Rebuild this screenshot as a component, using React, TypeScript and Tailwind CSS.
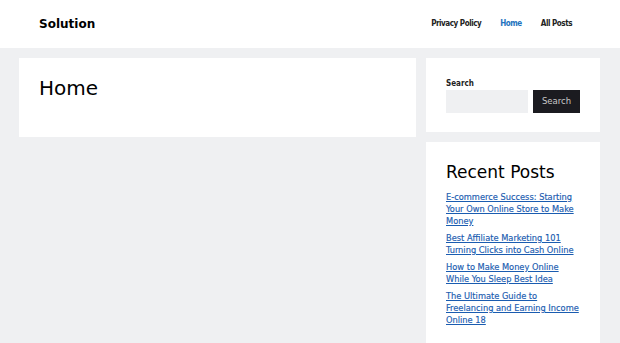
import React from 'react';

const posts = [
  'E-commerce Success: Starting Your Own Online Store to Make Money',
  'Best Affiliate Marketing 101 Turning Clicks into Cash Online',
  'How to Make Money Online While You Sleep Best Idea',
  'The Ultimate Guide to Freelancing and Earning Income Online 18',
];

export default function App() {
  return (
    <div className="min-h-[343px] bg-[#eff0f2] font-['DejaVu_Sans',sans-serif] text-[#222]">
      <header className="flex h-[48px] items-center justify-between bg-white pl-[39px] pr-[48px]">
        <a href="#" className="text-[12px] font-bold text-black">
          Solution
        </a>
        <nav className="flex gap-[19px] font-['DejaVu_Sans_Condensed','DejaVu_Sans',sans-serif] text-[8px] font-bold tracking-[-0.45px]">
          <a href="#" className="text-[#222]">Privacy Policy</a>
          <a href="#" className="text-[#1e73be]">Home</a>
          <a href="#" className="text-[#222]">All Posts</a>
        </nav>
      </header>

      <div className="flex items-start gap-[10px] px-[19px] pt-[10px]">
        <main className="h-[79px] w-[397px] bg-white px-[20px] pt-[16px]">
          <h1 className="text-[20px] leading-[28px] text-black">Home</h1>
        </main>

        <aside className="flex w-[174px] flex-col gap-[10px]">
          <div className="h-[74px] bg-white px-[20px] pt-[19px]">
            <label className="block font-['DejaVu_Sans_Condensed','DejaVu_Sans',sans-serif] text-[8px] font-bold leading-[13px] text-[#222]">
              Search
            </label>
            <div className="flex gap-[5px]">
              <input className="h-[23px] w-[82px] bg-[#eff0f2] outline-none" />
              <button className="h-[23px] w-[48px] bg-[#1b1b20] text-[8.5px] text-[#c8c8c8]">Search</button>
            </div>
          </div>

          <div className="h-[210px] bg-white px-[20px] pt-[19px]">
            <h2 className="mb-[8px] text-[17px] leading-[22px] text-black">Recent Posts</h2>
            <ul className="flex flex-col gap-[5px]">
              {posts.map((p) => (
                <li key={p}>
                  <a
                    href="#"
                    className="block font-['DejaVu_Sans_Condensed','DejaVu_Sans',sans-serif] text-[9.2px] leading-[12px] text-[#1a5cb0] underline [-webkit-text-stroke:0.15px_#1a5cb0]"
                  >
                    {p}
                  </a>
                </li>
              ))}
            </ul>
          </div>
        </aside>
      </div>
    </div>
  );
}
